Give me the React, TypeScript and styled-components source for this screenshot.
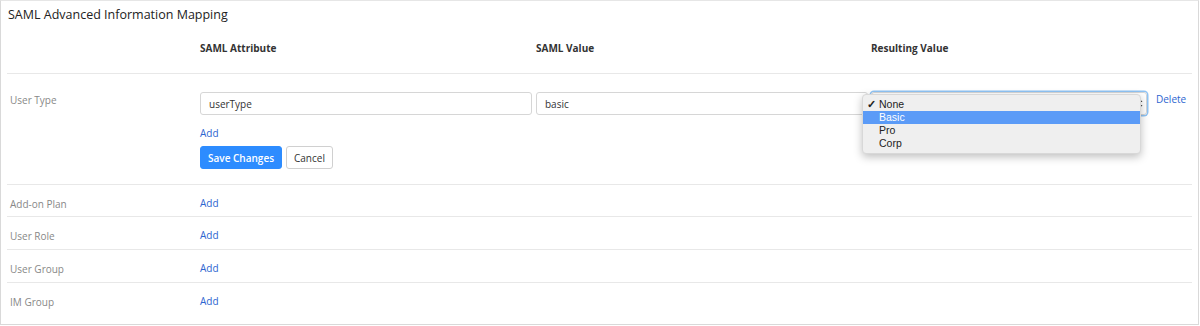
import React from "react";
import styled, { createGlobalStyle } from "styled-components";

const Global = createGlobalStyle`
  html, body { margin: 0; padding: 0; background: #fff; }
  body { font-family: "Open Sans", "Liberation Sans", sans-serif; }
  * { box-sizing: border-box; }
`;

const Frame = styled.div`
  width: 1199px;
  height: 325px;
  border: 1px solid #d9d9d9;
  border-top-color: #e6e6e6;
  background: #fff;
  position: relative;
  overflow: hidden;
`;

const Title = styled.div`
  font-size: 12.5px;
  color: #222;
  padding: 5px 7px 0;
  height: 28px;
`;

const Table = styled.div`
  margin: 0 6px;
`;

const Row = styled.div<{ $top?: boolean; $h: number }>`
  display: grid;
  grid-template-columns: 193px 336px 335px 285px 1fr;
  height: ${(p) => p.$h}px;
  border-top: ${(p) => (p.$top ? "1px solid #e8e8e8" : "none")};
`;

const HeaderCell = styled.div<{ $col: number }>`
  grid-column: ${(p) => p.$col};
  font-size: 10px;
  font-weight: 700;
  color: #333;
  padding-top: 12px;
  white-space: nowrap;
  text-align: left;
`;

const Label = styled.div<{ $pt: number }>`
  font-size: 10px;
  color: #888;
  padding: ${(p) => p.$pt}px 0 0 3px;
`;

const Cell = styled.div<{ $pt: number }>`
  padding-top: ${(p) => p.$pt}px;
  display: flex;
  flex-direction: column;
  align-items: flex-start;
`;

const Input = styled.div`
  width: 332px;
  height: 23px;
  border: 1px solid #d6d6d6;
  border-radius: 3px;
  font-size: 10px;
  color: #333;
  padding: 0 8px;
  display: flex;
  align-items: center;
`;

const SelectBox = styled.div`
  position: relative;
  width: 276px;
  height: 23px;
  border: 1px solid #d6d6d6;
  border-radius: 3px;
  box-shadow: 0 0 0 1.5px #8fc3f4;
`;

const Arrows = styled.svg`
  position: absolute;
  right: 3px;
  top: 5px;
`;

const Link = styled.a<{ $mt?: number }>`
  font-size: 10px;
  color: #2d65d0;
  text-decoration: none;
  margin-top: ${(p) => p.$mt ?? 0}px;
  cursor: pointer;
`;

const Buttons = styled.div`
  display: flex;
  gap: 4px;
  margin-top: 6px;
`;

const Button = styled.button<{ $primary?: boolean }>`
  height: 23px;
  padding: 0 7px;
  font-family: inherit;
  font-size: 10px;
  font-weight: ${(p) => (p.$primary ? 600 : 400)};
  color: ${(p) => (p.$primary ? "#fff" : "#333")};
  background: ${(p) => (p.$primary ? "#2d8cff" : "#fff")};
  border: 1px solid ${(p) => (p.$primary ? "#2d8cff" : "#d0d0d0")};
  border-radius: 3px;
`;

const Menu = styled.div`
  position: absolute;
  left: 861px;
  top: 93px;
  width: 279px;
  padding: 3px 0 3px;
  background: #efefef;
  border-radius: 4px;
  border: 1px solid #d8d8d8;
  box-shadow: 0 3px 8px rgba(0, 0, 0, 0.25);
  font-family: "Liberation Sans", "Open Sans", sans-serif;
`;

const MenuItem = styled.div<{ $active?: boolean }>`
  height: 13px;
  line-height: 13px;
  font-size: 10.5px;
  padding-left: 16px;
  position: relative;
  color: ${(p) => (p.$active ? "#fff" : "#222")};
  background: ${(p) => (p.$active ? "#5b9bf7" : "transparent")};
`;

const Check = styled.span`
  position: absolute;
  left: 4px;
  top: 0;
  font-size: 11px;
  font-weight: 700;
`;

const rows = ["Add-on Plan", "User Role", "User Group", "IM Group"];

export default function App() {
  return (
    <>
      <Global />
      <Frame>
        <Title>SAML Advanced Information Mapping</Title>
        <Table>
          <Row $h={44}>
            <HeaderCell $col={2}>SAML Attribute</HeaderCell>
            <HeaderCell $col={3}>SAML Value</HeaderCell>
            <HeaderCell $col={4}>Resulting Value</HeaderCell>
          </Row>
          <Row $top $h={111}>
            <Label $pt={19}>User Type</Label>
            <Cell $pt={18}>
              <Input>userType</Input>
              <Link $mt={11}>Add</Link>
              <Buttons>
                <Button $primary>Save Changes</Button>
                <Button>Cancel</Button>
              </Buttons>
            </Cell>
            <Cell $pt={18}>
              <Input>basic</Input>
            </Cell>
            <Cell $pt={18}>
              <SelectBox>
                <Arrows width="6" height="11" viewBox="0 0 6 11">
                  <path d="M3 1 L5.5 4 L0.5 4 Z M3 10 L5.5 7 L0.5 7 Z" fill="#444" />
                </Arrows>
              </SelectBox>
            </Cell>
            <Cell $pt={18}>
              <Link>Delete</Link>
            </Cell>
          </Row>
          {rows.map((r, i) => (
            <Row key={r} $top $h={i === 0 ? 32 : i === 3 ? 42 : 33}>
              <Label $pt={12}>{r}</Label>
              <Cell $pt={11}>
                <Link>Add</Link>
              </Cell>
            </Row>
          ))}
        </Table>
        <Menu>
          <MenuItem>
            <Check>✓</Check>None
          </MenuItem>
          <MenuItem $active>Basic</MenuItem>
          <MenuItem>Pro</MenuItem>
          <MenuItem>Corp</MenuItem>
        </Menu>
      </Frame>
    </>
  );
}
